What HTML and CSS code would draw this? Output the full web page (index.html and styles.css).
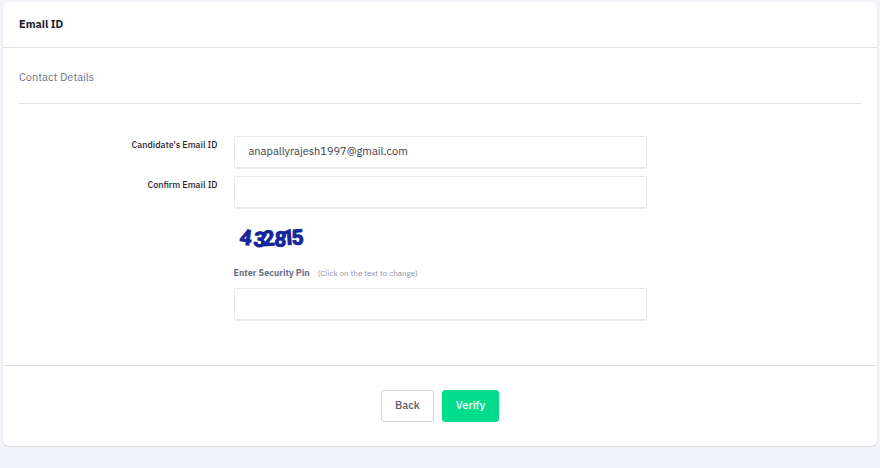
FILE: index.html
```html
<!DOCTYPE html>
<html lang="en">
<head>
<meta charset="utf-8">
<meta name="viewport" content="width=device-width, initial-scale=1">
<title>Email ID</title>
<link rel="stylesheet" href="styles.css">
</head>
<body>
<main class="card">
  <header class="card-head">
    <h1 class="card-title">Email ID</h1>
  </header>
  <form>
    <div class="card-body">
      <h2 class="section-title">Contact Details</h2>
      <div class="form-row">
        <label class="col-label" for="email">Candidate's Email ID</label>
        <div class="col-field">
          <input type="text" class="form-control" id="email" name="email" value="anapallyrajesh1997@gmail.com">
        </div>
      </div>
      <div class="form-row">
        <label class="col-label" for="confirmEmail">Confirm Email ID</label>
        <div class="col-field">
          <input type="text" class="form-control" id="confirmEmail" name="confirmEmail">
        </div>
      </div>
      <div class="form-row">
        <div class="col-field col-offset">
          <button type="button" class="captcha">
            <svg width="76" height="40" viewBox="0 0 76 40">
              <text y="28 30 30 30 29 29" x="5 19 29 40 49 58" rotate="7 7 -4 4 -4 -4">432815</text>
            </svg>
          </button>
          <div class="pin-label">
            <label for="pin">Enter Security Pin</label>
            <small>(Click on the text to change)</small>
          </div>
          <input type="text" class="form-control" id="pin" name="pin">
        </div>
      </div>
    </div>
    <footer class="card-foot">
      <button type="button" class="btn btn-back">Back</button>
      <button type="submit" class="btn btn-verify">Verify</button>
    </footer>
  </form>
</main>
</body>
</html>
```
FILE: styles.css
```css
*{box-sizing:border-box;margin:0;padding:0}
body{padding:2px 3px;background-color:#f3f4f9;color:#24262d}
body,button,input{font-family:"IBM Plex Sans",Roboto,"Liberation Sans",sans-serif;font-size:11px;line-height:16px}
.card{border-radius:6px;background-color:#fff;box-shadow:0 1px 1px #d6d7da}
.card-head{padding:14px 16px 15px;border-bottom:1px solid #dedfe2}
.card-title{font-size:11px;font-weight:700;color:#1b1d2b}
.card-body{padding:21px 16px 45px}
.section-title{margin-bottom:32px;padding-bottom:18px;border-bottom:1px solid #dedfe2;font-size:11px;font-weight:400;color:#6b7186}
.form-row{display:flex;margin:0 -8px 8px}
.form-row:last-child{margin-bottom:0}
.col-label{width:25%;padding:1px 8px;font-size:9px;font-weight:500;text-align:right}
.col-field{width:50%;padding:0 8px}
.col-offset{margin-left:25%}
.form-control{display:block;width:100%;height:32px;padding:0 14px 2px;border:1px solid #e8e9ec;border-radius:2px;background-color:#fff;box-shadow:0 1px 0 #eeeeef;color:#383b43}
.captcha{display:block;border:0;background:none;cursor:pointer}
.captcha svg{display:block}
.captcha text{font-family:Roboto,"Liberation Sans",sans-serif;font-size:21px;font-weight:700;fill:#14269a;stroke:#14269a;stroke-width:1}
.pin-label{display:flex;gap:8px;margin:9px 0 7px;font-size:9px;color:#6b7186}
.pin-label label{font-weight:700}
.pin-label small{font-size:8px;color:#8e92a2}
.card-foot{display:flex;justify-content:center;gap:8px;padding:24px 16px;border-top:1px solid #dedfe2}
.btn{height:32px;padding:0 13px 2px;border:1px solid #d4d6dd;border-radius:3px;font-weight:500;cursor:pointer}
.btn-back{background-color:#fff;color:#595d6e}
.btn-verify{border-color:#04d98b;background-color:#04dc8d;color:#fff}
```
